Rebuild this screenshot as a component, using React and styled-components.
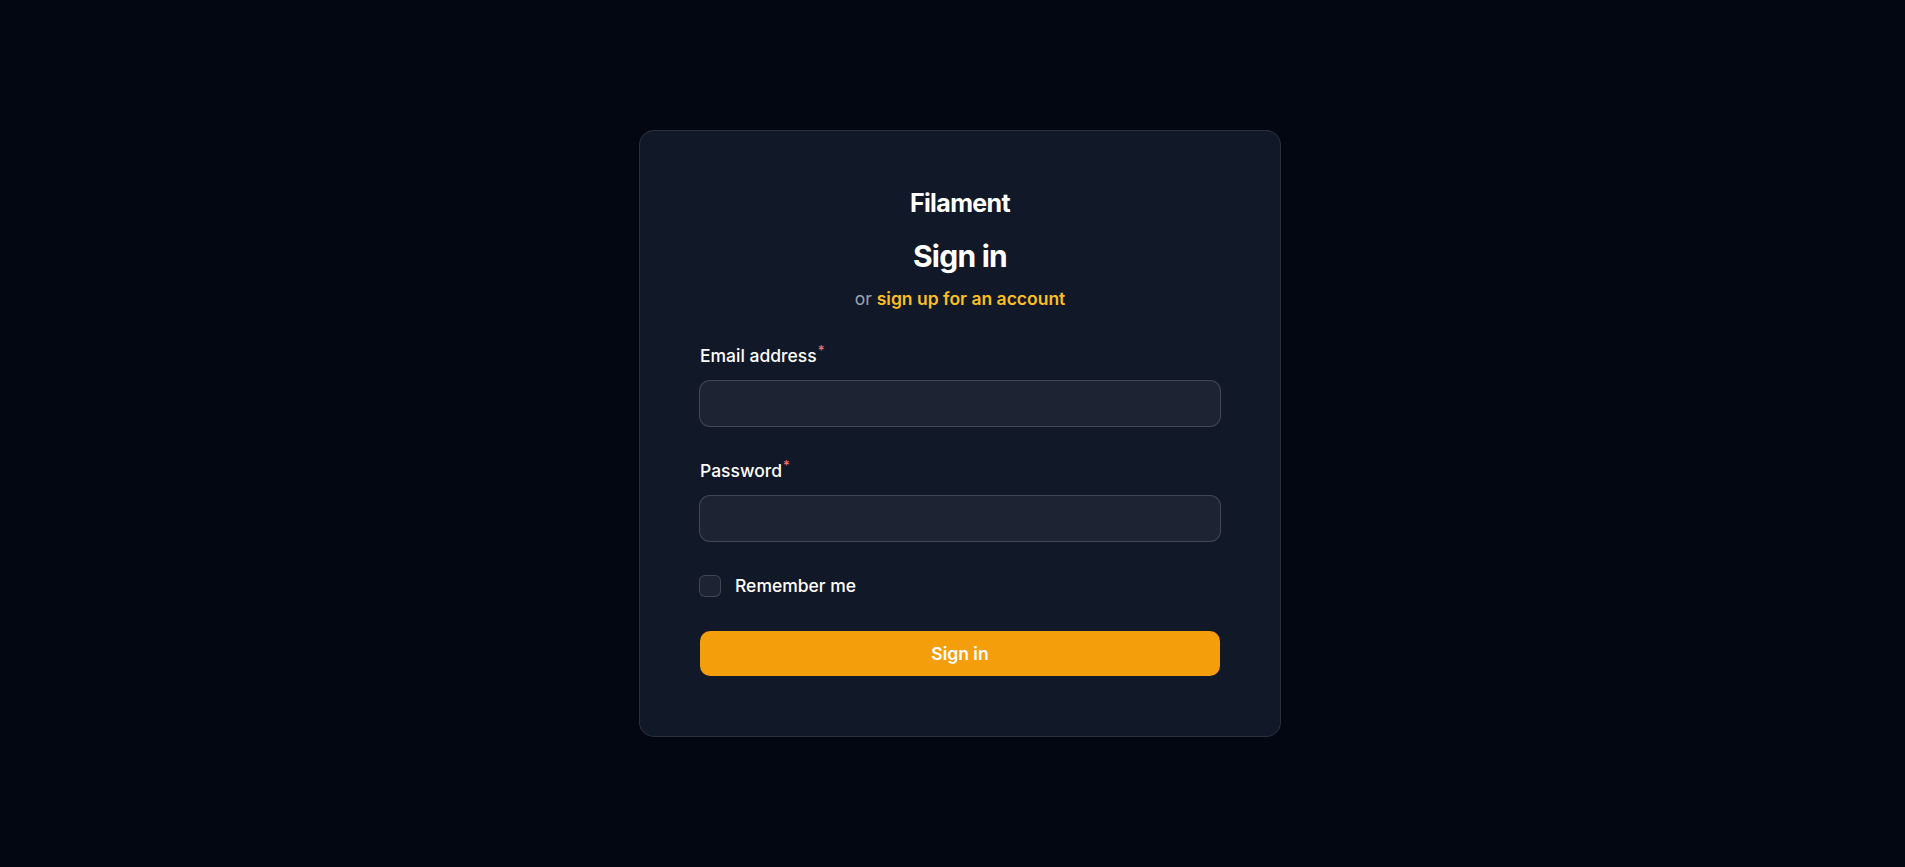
import React from "react";
import styled, { createGlobalStyle } from "styled-components";

const GlobalStyle = createGlobalStyle`
  html, body {
    margin: 0;
    padding: 0;
    background: #030712;
  }
  body {
    font-family: Inter, "Noto Sans", "Liberation Sans", sans-serif;
    color: #fff;
  }
  * {
    box-sizing: border-box;
  }
`;

const Page = styled.main`
  min-height: 100vh;
  display: flex;
  align-items: center;
  justify-content: center;
  /* the original layout is centred on x=960 */
  padding-left: 15px;
`;

const Card = styled.section`
  width: 642px;
  padding: 60px;
  background: #111827;
  border: 1px solid rgba(255, 255, 255, 0.1);
  border-radius: 15px;
  display: flex;
  flex-direction: column;
  gap: 30px;
`;

const Header = styled.header`
  display: flex;
  flex-direction: column;
  align-items: center;
`;

const Brand = styled.div`
  font-size: 25px;
  line-height: 25px;
  font-weight: 700;
  letter-spacing: -0.025em;
  margin-bottom: 20px;
`;

const Heading = styled.h1`
  margin: 0;
  font-size: 30px;
  line-height: 40px;
  font-weight: 700;
  letter-spacing: -0.025em;
  text-align: center;
`;

const Subheading = styled.p`
  margin: 10px 0 0;
  font-size: 17.5px;
  line-height: 25px;
  color: #9ca3af;
  text-align: center;

  a {
    color: #fbbf24;
    font-weight: 600;
    text-decoration: none;
  }
`;

const Form = styled.form`
  display: grid;
  gap: 30px;
`;

const Field = styled.div`
  display: grid;
  gap: 10px;
`;

const Label = styled.label`
  font-size: 17.5px;
  line-height: 30px;
  font-weight: 500;
  color: #fff;

  sup {
    color: #f87171;
    font-weight: 500;
    font-size: 0.75em;
    line-height: 0;
    vertical-align: super;
    margin-left: 1px;
  }
`;

const Input = styled.input`
  display: block;
  width: 100%;
  height: 45px;
  padding: 7.5px 15px;
  border: none;
  border-radius: 10px;
  background: rgba(255, 255, 255, 0.05);
  box-shadow: 0 0 0 1px rgba(255, 255, 255, 0.2);
  color: #fff;
  font: inherit;
  font-size: 17.5px;
  outline: none;
`;

const CheckRow = styled.label`
  display: flex;
  align-items: center;
  gap: 15px;
  font-size: 17.5px;
  line-height: 30px;
  font-weight: 500;
`;

const Box = styled.span`
  width: 20px;
  height: 20px;
  border-radius: 5px;
  background: rgba(255, 255, 255, 0.05);
  box-shadow: 0 0 0 1px rgba(255, 255, 255, 0.2);
`;

const Button = styled.button`
  height: 45px;
  border: none;
  border-radius: 10px;
  background: #f59e0b;
  color: #fff;
  font: inherit;
  font-size: 17.5px;
  line-height: 25px;
  font-weight: 600;
  cursor: pointer;
`;

export default function App() {
  return (
    <>
      <GlobalStyle />
      <Page>
        <Card>
          <Header>
            <Brand>Filament</Brand>
            <Heading>Sign in</Heading>
            <Subheading>
              or <a href="#register">sign up for an account</a>
            </Subheading>
          </Header>
          <Form onSubmit={(e) => e.preventDefault()}>
            <Field>
              <Label htmlFor="email">
                Email address<sup>*</sup>
              </Label>
              <Input id="email" type="email" />
            </Field>
            <Field>
              <Label htmlFor="password">
                Password<sup>*</sup>
              </Label>
              <Input id="password" type="password" />
            </Field>
            <CheckRow>
              <Box />
              Remember me
            </CheckRow>
            <Button type="submit">Sign in</Button>
          </Form>
        </Card>
      </Page>
    </>
  );
}
